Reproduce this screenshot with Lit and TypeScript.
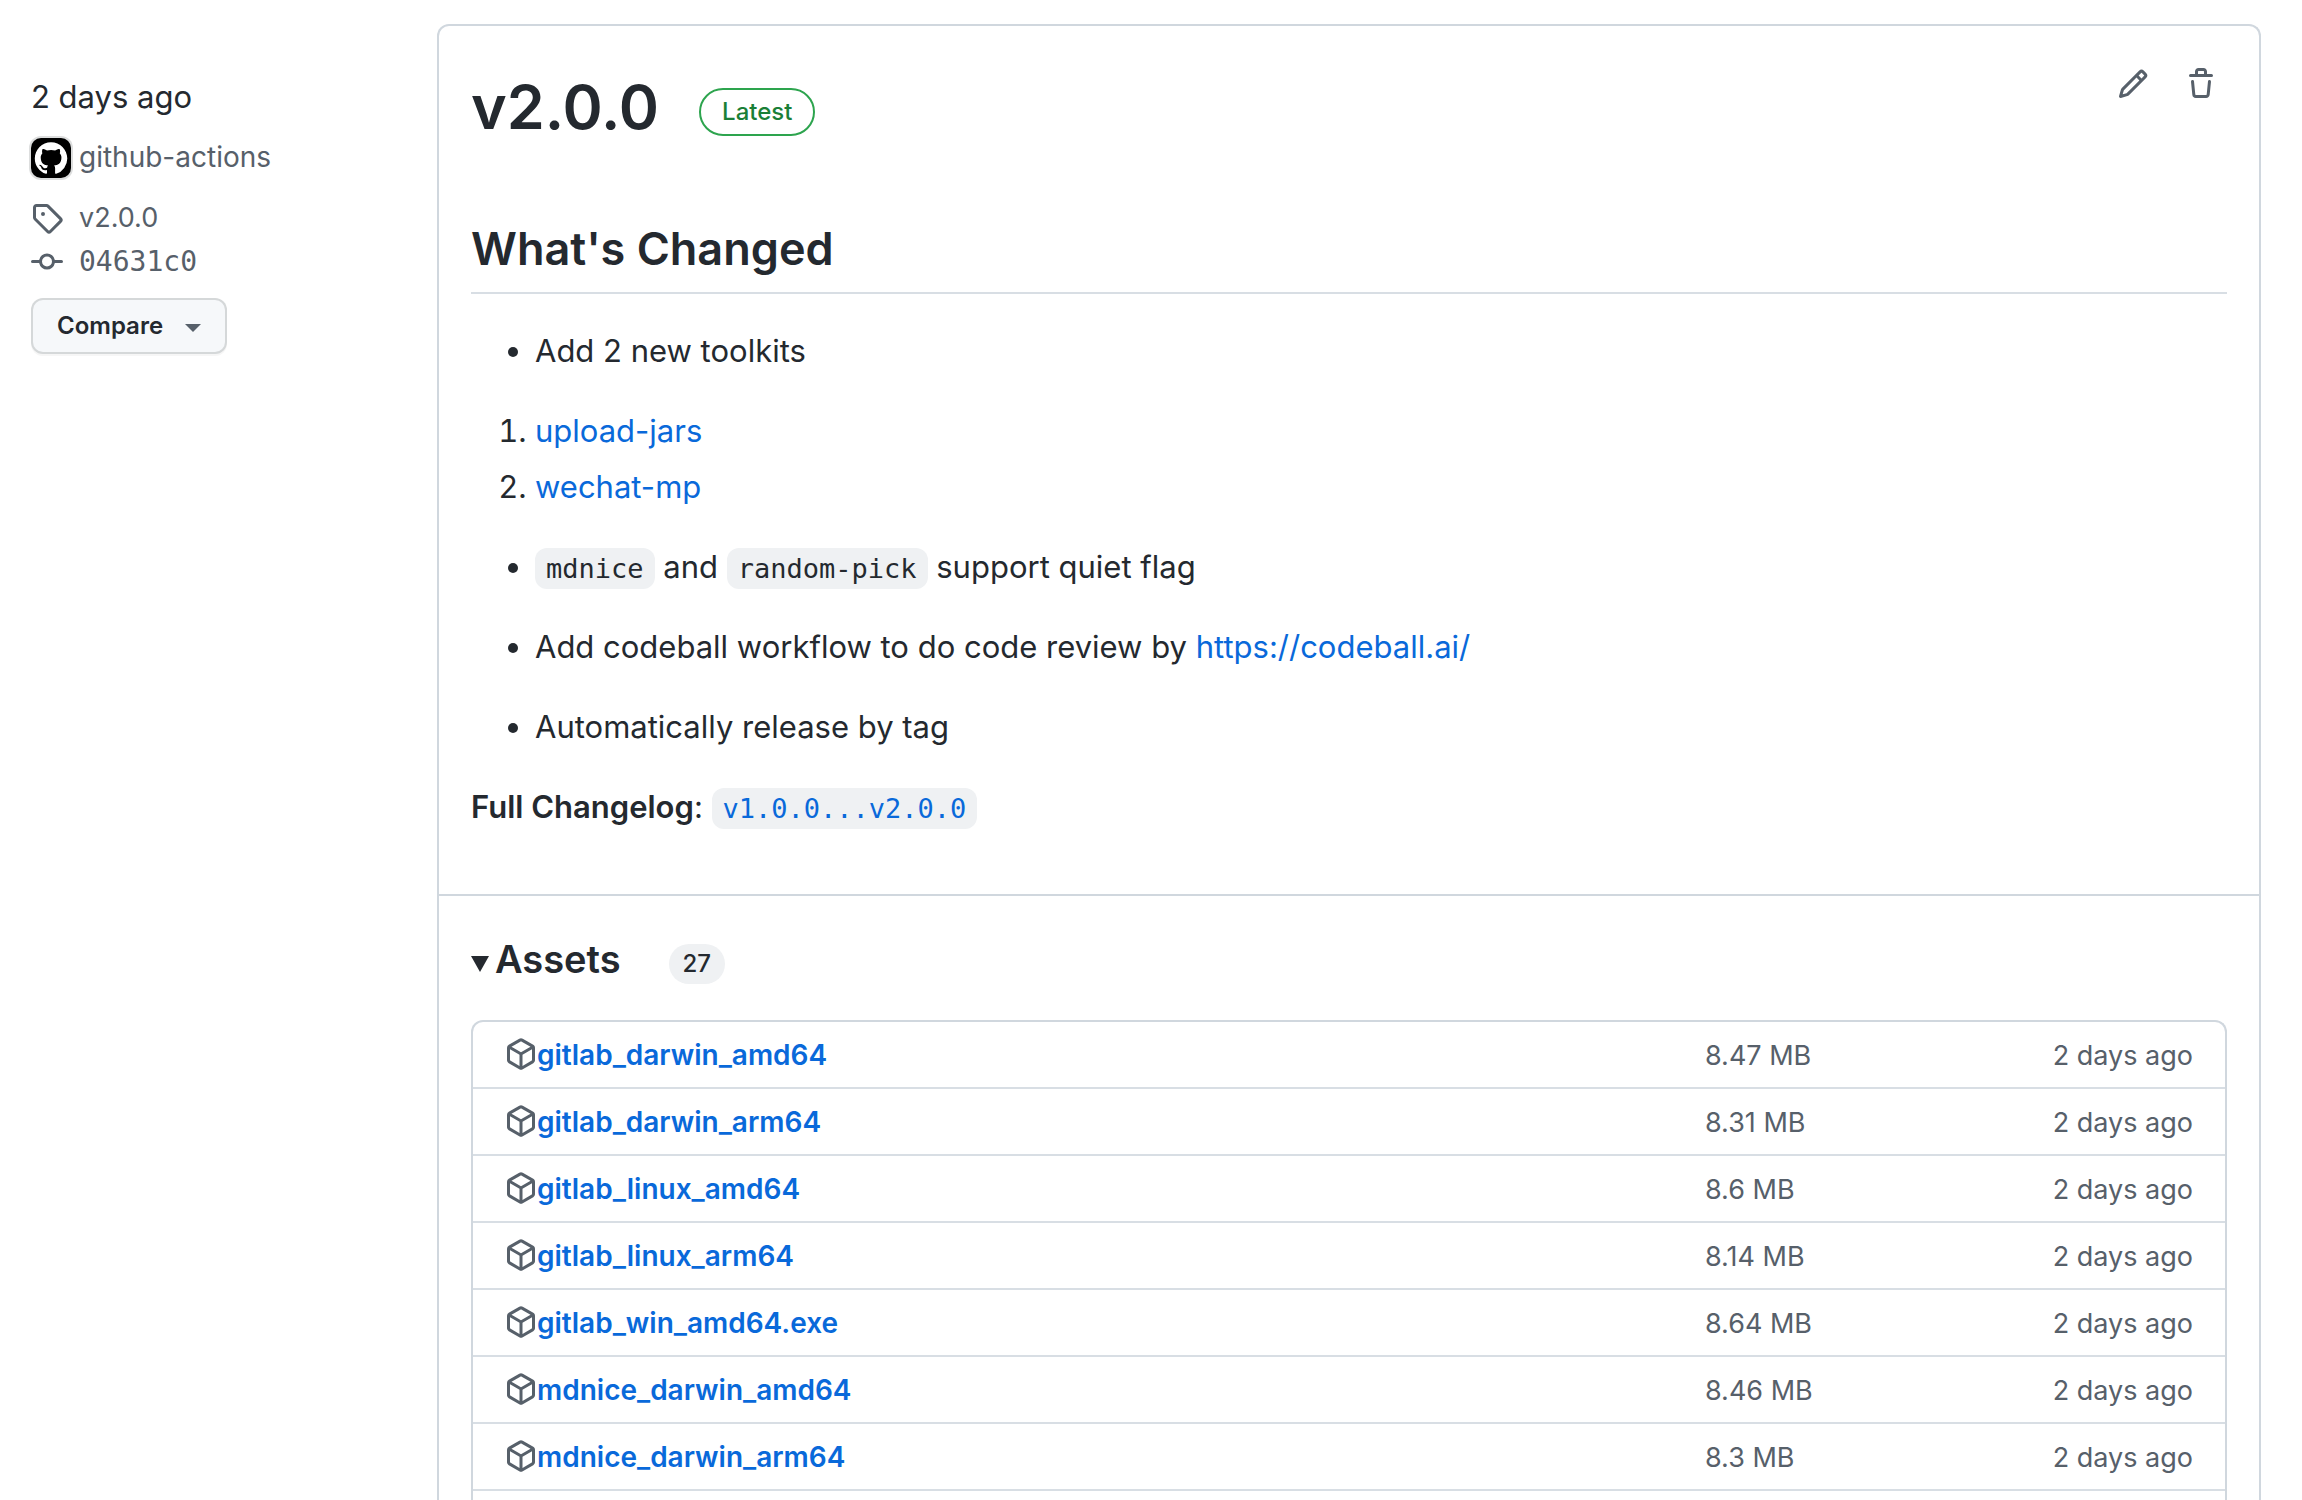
import { LitElement, html, css, svg, nothing } from "lit";
import { customElement, property, state } from "lit/decorators.js";

interface Asset {
  name: string;
  size: string;
  date: string;
}

const ASSETS: Asset[] = [
  { name: "gitlab_darwin_amd64", size: "8.47 MB", date: "2 days ago" },
  { name: "gitlab_darwin_arm64", size: "8.31 MB", date: "2 days ago" },
  { name: "gitlab_linux_amd64", size: "8.6 MB", date: "2 days ago" },
  { name: "gitlab_linux_arm64", size: "8.14 MB", date: "2 days ago" },
  { name: "gitlab_win_amd64.exe", size: "8.64 MB", date: "2 days ago" },
  { name: "mdnice_darwin_amd64", size: "8.46 MB", date: "2 days ago" },
  { name: "mdnice_darwin_arm64", size: "8.3 MB", date: "2 days ago" },
];

const ICONS = {
  tag: svg`<path fill-rule="evenodd" d="M2.5 7.775V2.75a.25.25 0 01.25-.25h5.025a.25.25 0 01.177.073l6.25 6.25a.25.25 0 010 .354l-5.025 5.025a.25.25 0 01-.354 0l-6.25-6.25a.25.25 0 01-.073-.177zm-1.5 0V2.75C1 1.784 1.784 1 2.75 1h5.025c.464 0 .91.184 1.238.513l6.25 6.25a1.75 1.75 0 010 2.474l-5.026 5.026a1.75 1.75 0 01-2.474 0l-6.25-6.25A1.75 1.75 0 011 7.775zM6 5a1 1 0 100 2 1 1 0 000-2z"/>`,
  commit: svg`<path fill-rule="evenodd" d="M10.5 7.75a2.5 2.5 0 11-5 0 2.5 2.5 0 015 0zm1.43.75a4.002 4.002 0 01-7.86 0H.75a.75.75 0 110-1.5h3.32a4.001 4.001 0 017.86 0h3.32a.75.75 0 110 1.5h-3.32z"/>`,
  pencil: svg`<path fill-rule="evenodd" d="M11.013 1.427a1.75 1.75 0 012.474 0l1.086 1.086a1.75 1.75 0 010 2.474l-8.61 8.61c-.21.21-.47.364-.756.445l-3.251.93a.75.75 0 01-.927-.928l.929-3.25a1.75 1.75 0 01.445-.758l8.61-8.61zm1.414 1.06a.25.25 0 00-.354 0L10.811 3.75l1.439 1.44 1.263-1.263a.25.25 0 000-.354l-1.086-1.086zM11.189 6.25L9.75 4.81l-6.286 6.287a.25.25 0 00-.064.108l-.558 1.953 1.953-.558a.249.249 0 00.108-.064l6.286-6.286z"/>`,
  trash: svg`<path fill-rule="evenodd" d="M6.5 1.75a.25.25 0 01.25-.25h2.5a.25.25 0 01.25.25V3h-3V1.75zm4.5 0V3h2.25a.75.75 0 010 1.5H2.75a.75.75 0 010-1.5H5V1.75C5 .784 5.784 0 6.75 0h2.5C10.216 0 11 .784 11 1.75zM4.496 6.675a.75.75 0 10-1.492.15l.66 6.6A1.75 1.75 0 005.405 15h5.19c.9 0 1.652-.681 1.741-1.576l.66-6.6a.75.75 0 00-1.492-.149l-.66 6.6a.25.25 0 01-.249.225h-5.19a.25.25 0 01-.249-.225l-.66-6.6z"/>`,
  pkg: svg`<path fill-rule="evenodd" d="M8.878.392a1.75 1.75 0 00-1.756 0l-5.25 3.045A1.75 1.75 0 001 4.951v6.098c0 .624.332 1.2.872 1.514l5.25 3.045a1.75 1.75 0 001.756 0l5.25-3.045c.54-.313.872-.89.872-1.514V4.951c0-.624-.332-1.2-.872-1.514L8.878.392zM7.875 1.69a.25.25 0 01.25 0l4.63 2.685L8 7.133 3.245 4.375l4.63-2.685zM2.5 5.677v5.372c0 .09.047.171.125.216l4.625 2.683V8.432L2.5 5.677zm6.25 8.271l4.625-2.683a.25.25 0 00.125-.216V5.677L8.75 8.432v5.516z"/>`,
};

type IconName = keyof typeof ICONS;

@customElement("gh-icon")
class GhIcon extends LitElement {
  static styles = css`
    :host { display: block; flex: none; width: 32px; height: 32px; }
    .glyph { display: block; width: 100%; height: 100%; fill: currentColor; }
  `;
  @property() name: IconName = "tag";
  render() {
    return html`<svg class="glyph" viewBox="0 0 16 16" aria-hidden="true">${ICONS[this.name]}</svg>`;
  }
}

@customElement("release-sidebar")
class ReleaseSidebar extends LitElement {
  static styles = css`
    :host {
      display: flex;
      flex-direction: column;
      align-items: flex-start;
      flex: 0 0 406px;
      padding-top: 48px;
      font-size: 27px;
      line-height: 40px;
      color: #57606a;
    }
    .date { margin-bottom: 14px; font-size: 31px; line-height: 50px; color: #24292f; }
    .line { display: flex; align-items: center; gap: 16px; height: 44px; color: inherit; text-decoration: none; }
    .author { align-items: flex-start; gap: 8px; height: 40px; padding: 2px 0; margin-bottom: 16px; font-size: 28px; line-height: 38px; }
    .avatar { display: block; width: 40px; height: 40px; background: #000; border-radius: 10px; box-shadow: 0 0 0 2px rgba(27, 31, 36, 0.15); }
    .mono { font-family: "DejaVu Sans Mono", "Liberation Mono", monospace; font-size: 28px; }
    .compare {
      display: flex;
      align-items: center;
      gap: 22px;
      height: 56px;
      margin-top: 14px;
      padding: 0 24px;
      font: 600 24px/40px Inter, "Liberation Sans", sans-serif;
      color: #24292f;
      background: #f6f8fa;
      border: 2px solid rgba(27, 31, 36, 0.15);
      border-radius: 12px;
      box-shadow: 0 2px 0 rgba(27, 31, 36, 0.04);
    }
    .caret { width: 16px; height: 8px; margin-top: 4px; fill: #57606a; }
  `;
  render() {
    return html`
      <div class="date">2 days ago</div>
      <a class="line author" href="#author">
        <svg class="avatar" viewBox="0 0 40 40" aria-hidden="true">
          <g transform="translate(3.8 4.2) scale(2.03)">
            <path fill="#fff" d="M8 0C3.58 0 0 3.58 0 8c0 3.54 2.29 6.53 5.47 7.59.4.07.55-.17.55-.38 0-.19-.01-.82-.01-1.49-2.01.37-2.53-.49-2.69-.94-.09-.23-.48-.94-.82-1.13-.28-.15-.68-.52-.01-.53.63-.01 1.08.58 1.23.82.72 1.21 1.87.87 2.33.66.07-.52.28-.87.51-1.07-1.78-.2-3.64-.89-3.64-3.95 0-.87.31-1.59.82-2.15-.08-.2-.36-1.02.08-2.12 0 0 .67-.21 2.2.82.64-.18 1.32-.27 2-.27.68 0 1.36.09 2 .27 1.53-1.04 2.2-.82 2.2-.82.44 1.1.16 1.92.08 2.12.51.56.82 1.27.82 2.15 0 3.07-1.87 3.75-3.65 3.95.29.25.54.73.54 1.48 0 1.07-.01 1.93-.01 2.2 0 .21.15.46.55.38A8.013 8.013 0 0016 8c0-4.42-3.58-8-8-8z"/>
          </g>
        </svg>
        <span>github-actions</span>
      </a>
      <a class="line" href="#tag"><gh-icon name="tag"></gh-icon><span>v2.0.0</span></a>
      <a class="line" href="#commit"><gh-icon name="commit"></gh-icon><span class="mono">04631c0</span></a>
      <button class="compare" type="button">
        <span>Compare</span>
        <svg class="caret" viewBox="0 0 16 8" aria-hidden="true"><path d="M0 0h16L8 8z"/></svg>
      </button>
    `;
  }
}

@customElement("release-notes")
class ReleaseNotes extends LitElement {
  static styles = css`
    :host { display: block; font-size: 31px; line-height: 50px; }
    .heading { margin: 0 0 32px; padding-bottom: 12px; font-size: 45px; line-height: 62px; font-weight: 600; border-bottom: 2px solid #d8dee4; }
    .list { margin: 0 0 30px; padding-left: 64px; }
    .item + .item { margin-top: 6px; }
    .loose .item + .item { margin-top: 30px; }
    .link { color: #0969da; text-decoration: none; }
    .code { padding: 5px 11px; font-family: "DejaVu Sans Mono", "Liberation Mono", monospace; font-size: 27px; line-height: 40px; background: #eff1f3; border-radius: 12px; }
    .changelog { margin: 0; }
    .strong { font-weight: 600; }
  `;
  render() {
    return html`
      <h2 class="heading">What's Changed</h2>
      <ul class="list">
        <li class="item">Add 2 new toolkits</li>
      </ul>
      <ol class="list">
        <li class="item"><a class="link" href="#upload-jars">upload-jars</a></li>
        <li class="item"><a class="link" href="#wechat-mp">wechat-mp</a></li>
      </ol>
      <ul class="list loose">
        <li class="item"><code class="code">mdnice</code> and <code class="code">random-pick</code> support quiet flag</li>
        <li class="item">Add codeball workflow to do code review by <a class="link" href="https://codeball.ai/">https://codeball.ai/</a></li>
        <li class="item">Automatically release by tag</li>
      </ul>
      <p class="changelog"><strong class="strong">Full Changelog</strong>: <a class="link" href="#compare"><code class="code">v1.0.0...v2.0.0</code></a></p>
    `;
  }
}

@customElement("release-assets")
class ReleaseAssets extends LitElement {
  static styles = css`
    :host { display: flex; flex-direction: column; flex: 1; padding: 32px 32px 0; border-top: 2px solid #d0d7de; }
    .toggle {
      display: flex;
      align-items: center;
      align-self: flex-start;
      height: 60px;
      margin: 0 0 32px;
      padding: 0;
      font: 600 38px/58px Inter, "Liberation Sans", sans-serif;
      color: #24292f;
      background: none;
      border: 0;
    }
    .label { padding-top: 2px; }
    .marker { width: 18px; height: 16px; margin: 11px 6px 0 0; fill: #24292f; }
    .closed { transform: rotate(-90deg); }
    .count { margin: 12px 0 0 48px; padding: 0 14px; font-size: 24px; line-height: 40px; font-weight: 500; background: #eff1f3; border-radius: 20px; }
    .box { flex: 1; border: 2px solid #d0d7de; border-bottom: 0; border-radius: 12px 12px 0 0; }
    .table { width: 100%; border-spacing: 0; font-size: 27px; line-height: 41px; color: #57606a; }
    .cell { padding: 13px 0 11px; border-bottom: 2px solid #d8dee4; text-align: left; font-weight: 400; }
    .name { padding-left: 32px; }
    .size { width: 280px; }
    .date { width: 208px; padding-right: 32px; text-align: right; }
    .file { display: flex; align-items: flex-start; }
    .pkg { margin-top: 3px; }
    .link { color: #0969da; font-size: 28px; font-weight: 600; text-decoration: none; }
  `;
  @state() private open = true;
  render() {
    return html`
      <button class="toggle" type="button" aria-expanded=${this.open} @click=${() => (this.open = !this.open)}>
        <svg class="marker ${this.open ? "" : "closed"}" viewBox="0 0 18 16" aria-hidden="true"><path d="M0 0h18L9 16z"/></svg>
        <span class="label">Assets</span>
        <span class="count">27</span>
      </button>
      ${this.open
        ? html`<div class="box">
            <table class="table" aria-label="Assets">
              <tbody>
                ${ASSETS.map(
                  (a) => html`<tr>
                    <th class="cell name" scope="row">
                      <div class="file"><gh-icon class="pkg" name="pkg"></gh-icon><a class="link" href="#${a.name}">${a.name}</a></div>
                    </th>
                    <td class="cell size">${a.size}</td>
                    <td class="cell date">${a.date}</td>
                  </tr>`
                )}
              </tbody>
            </table>
          </div>`
        : nothing}
    `;
  }
}

@customElement("app-root")
class AppRoot extends LitElement {
  static styles = css`
    :host {
      display: flex;
      box-sizing: border-box;
      min-height: 100vh;
      padding: 24px 41px 0 31px;
      font-family: Inter, "Liberation Sans", sans-serif;
      color: #24292f;
      background: #fff;
    }
    .card { display: flex; flex-direction: column; flex: 1; min-width: 0; border: 2px solid #d0d7de; border-bottom: 0; border-radius: 12px 12px 0 0; }
    .body { padding: 32px 32px 62px; }
    .header { display: flex; justify-content: space-between; align-items: flex-start; margin-bottom: 62px; }
    .title { display: flex; align-items: center; gap: 40px; }
    .version { margin: 0; font-size: 61px; line-height: 98px; font-weight: 600; }
    .badge { margin-top: 10px; padding: 0 21px; font-size: 24px; line-height: 44px; font-weight: 500; color: #1a7f37; border: 2px solid #2da44e; border-radius: 24px; }
    .actions { display: flex; gap: 16px; }
    .action { padding: 10px; color: #57606a; background: none; border: 0; }
  `;
  render() {
    return html`
      <release-sidebar></release-sidebar>
      <main class="card">
        <section class="body">
          <header class="header">
            <div class="title">
              <h1 class="version">v2.0.0</h1>
              <span class="badge">Latest</span>
            </div>
            <div class="actions">
              <button class="action" type="button" aria-label="Edit release"><gh-icon name="pencil"></gh-icon></button>
              <button class="action" type="button" aria-label="Delete release"><gh-icon name="trash"></gh-icon></button>
            </div>
          </header>
          <release-notes></release-notes>
        </section>
        <release-assets></release-assets>
      </main>
    `;
  }
}
